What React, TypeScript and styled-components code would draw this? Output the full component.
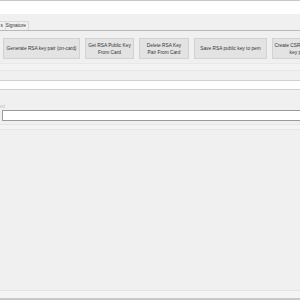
import React from 'react'
import styled, { createGlobalStyle } from 'styled-components'

const GlobalStyle = createGlobalStyle`
  html, body {
    margin: 0;
    padding: 0;
    background: #f0f0f0;
  }
  body {
    width: 300px;
    height: 300px;
    overflow: hidden;
    font-family: 'Liberation Sans', Arial, sans-serif;
  }
`

const Window = styled('div')`
  width: 300px;
  height: 300px;
  display: flex;
  flex-direction: column;
  background: #f0f0f0;
  border-top: 1px solid #c8c8c8;
  box-sizing: border-box;
  overflow: hidden;
`

const TopStrip = styled('div')`
  height: 13px;
  background: #ffffff;
`

const TabStrip = styled('div')`
  height: 16px;
  display: flex;
  align-items: flex-end;
  background: #f0f0f0;
`

const Tab = styled('div')<{ $width: number }>`
  width: ${(p) => p.$width}px;
  height: 9px;
  box-sizing: border-box;
  border: 1px solid #d9d9d9;
  border-bottom: none;
  border-left: none;
  background: #f0f0f0;
  font-size: 4.8px;
  line-height: 8px;
  color: #333;
  display: flex;
  justify-content: flex-end;
  padding-right: 2px;
  white-space: nowrap;
  overflow: hidden;
`

const TabPage = styled('div')`
  height: 50px;
  border-top: 1px solid #b9b9b9;
  box-sizing: border-box;
  background: #f0f0f0;
  display: flex;
  flex-direction: column;
`

const ButtonRow = styled('div')`
  display: flex;
  gap: 5px;
  padding: 7px 0 0 3px;
  white-space: nowrap;
`

const ActionButton = styled('button')<{ $width: number }>`
  flex: 0 0 ${(p) => p.$width}px;
  height: 21px;
  padding: 0;
  box-sizing: border-box;
  border: 1px solid #d2d2d2;
  background: #e3e3e3;
  color: #333333;
  font-family: 'Liberation Sans', Arial, sans-serif;
  font-size: 4.8px;
  line-height: 7px;
  text-align: center;
`

const Band = styled('div')<{ $height: number; $color: string }>`
  height: ${(p) => p.$height}px;
  background: ${(p) => p.$color};
`

const WhiteStrip = styled('div')`
  height: 8px;
  background: #ffffff;
  border-top: 1px solid #cfcfcf;
  border-bottom: 1px solid #d0d0d0;
`

const FormPanel = styled('div')`
  display: flex;
  flex-direction: column;
  padding-top: 14px;
`

const FieldRow = styled('div')`
  display: flex;
  flex-direction: column;
  gap: 1px;
`

const FieldLabel = styled('div')`
  width: 5px;
  font-size: 4.8px;
  line-height: 5px;
  color: #bdbdbd;
  overflow: hidden;
  direction: rtl;
  white-space: nowrap;
`

const TextBox = styled('div')`
  margin-left: 2px;
  width: 310px;
  height: 11px;
  box-sizing: border-box;
  background: #ffffff;
  border: 1px solid #9a9a9a;
`

const Filler = styled('div')`
  flex: 1;
  display: flex;
  flex-direction: column;
  justify-content: flex-end;
`

const BottomEdge = styled('div')`
  height: 10px;
  border-top: 1px solid #e4e4e4;
  border-bottom: 2px solid #c8c8c8;
  box-sizing: border-box;
  background: #f4f4f4;
`

const buttons = [
  { width: 77, label: ['Generate RSA key pair (on-card)'] },
  { width: 49, label: ['Get RSA Public Key', 'From Card'] },
  { width: 50, label: ['Delete RSA Key', 'Pair From Card'] },
  { width: 73, label: ['Save RSA public key to pem'] },
  { width: 52, label: ['Create CSR with RSA', 'key pair'] },
]

function App() {
  return (
    <>
      <GlobalStyle />
      <Window>
        <TopStrip />
        <TabStrip>
          <Tab $width={6}>s</Tab>
          <Tab $width={23}>Signature</Tab>
        </TabStrip>
        <TabPage>
          <ButtonRow>
            {buttons.map((b) => (
              <ActionButton key={b.label[0]} $width={b.width}>
                {b.label.map((line, i) => (
                  <React.Fragment key={line}>
                    {i > 0 && <br />}
                    {line}
                  </React.Fragment>
                ))}
              </ActionButton>
            ))}
          </ButtonRow>
          <Band $height={4} $color="#f0f0f0" />
          <Band $height={1} $color="#e8e8e8" />
          <Band $height={6} $color="#f3f3f3" />
          <Band $height={1} $color="#e6e6e6" />
        </TabPage>
        <WhiteStrip />
        <FormPanel>
          <FieldRow>
            <FieldLabel>Text:</FieldLabel>
            <TextBox />
          </FieldRow>
          <Band $height={3} $color="#f0f0f0" />
          <Band $height={1} $color="#e6e6e6" />
          <Band $height={4} $color="#f3f3f3" />
          <Band $height={1} $color="#e6e6e6" />
        </FormPanel>
        <Filler>
          <BottomEdge />
        </Filler>
      </Window>
    </>
  )
}

export default App
